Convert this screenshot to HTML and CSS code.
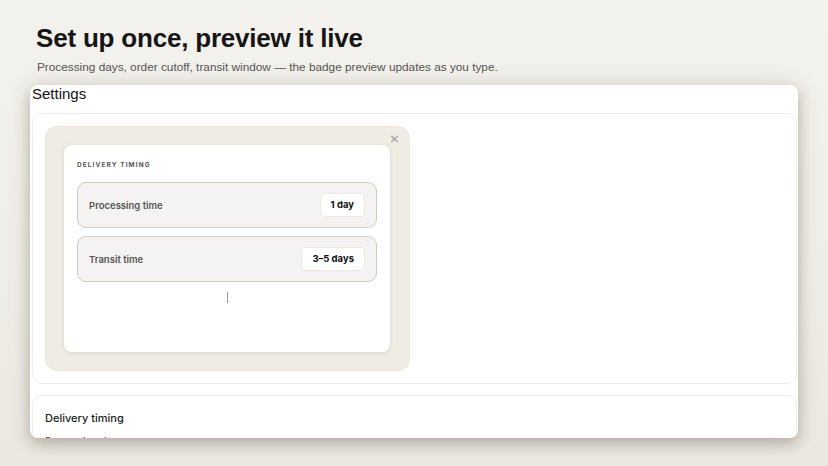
FILE: index.html
```html
<!DOCTYPE html>
<html lang="en">
<head>
  <meta charset="UTF-8" />
  <meta name="viewport" content="width=device-width, initial-scale=1" />
  <title>Delivery badge settings</title>
  <link rel="stylesheet" href="styles.css">
</head>
<body>

  <!-- Page heading -->
  <header class="intro">
    <h1>Set up once, preview it live</h1>
    <p>Processing days, order cutoff, transit window — the badge preview updates as you type.</p>
  </header>

  <!-- Settings window -->
  <main class="window">
    <div class="window-title">Settings</div>

    <!-- Live badge preview -->
    <section class="card preview-card">
      <div class="preview">
        <span class="close">&times;</span>
        <div class="panel">
          <div class="panel-label">DELIVERY TIMING</div>
          <div class="timing-row">
            <span class="timing-name">Processing time</span>
            <span class="badge">1 day</span>
          </div>
          <div class="timing-row">
            <span class="timing-name">Transit time</span>
            <span class="badge">3–5 days</span>
          </div>
          <div class="caret"></div>
        </div>
      </div>
    </section>

    <!-- Form -->
    <section class="card form-card">
      <h3>Delivery timing</h3>
      <label>Processing days</label>
    </section>
  </main>

</body>
</html>
```

FILE: styles.css
```css
body {
  margin: 0;
  height: 466px;
  overflow: hidden;
  font-family: "Liberation Sans", Arial, sans-serif;
  background: linear-gradient(180deg, #f4f2ed 0%, #efede7 60%, #ebe8e1 100%);
  color: #1a1a1a;
}
.intro {
  padding: 22px 36px 0;
}
.intro h1 {
  margin: 0;
  font-size: 26px;
  line-height: 32px;
  font-weight: bold;
  letter-spacing: -0.2px;
  color: #161616;
}
.intro p {
  margin: 5px 0 0 1px;
  font-size: 11.8px;
  line-height: 16px;
  color: #555;
}
/* Window */
.window {
  margin: 10px 30px 0;
  height: 353px;
  overflow: hidden;
  background: #fff;
  border-radius: 8px;
  box-shadow: 0 6px 14px rgba(70, 60, 40, 0.28), 0 0 24px rgba(70, 60, 40, 0.12);
}
.window-title {
  padding: 0 2px;
  font-size: 15px;
  line-height: 18px;
  color: #111;
}
.card {
  margin: 10px 1px 0 2px;
  border: 1px solid #efede9;
  border-radius: 10px;
  padding: 12px;
}
.form-card {
  margin-top: 11px;
  padding: 15px 12px;
}
.form-card h3 {
  margin: 0;
  font-family: Inter, "Liberation Sans", sans-serif;
  font-size: 11px;
  line-height: 14px;
  font-weight: 500;
  color: #1b1b1b;
}
.form-card label {
  display: block;
  margin-top: 10px;
  font-family: Inter, "Liberation Sans", sans-serif;
  font-size: 10px;
  line-height: 12px;
  color: #444;
}
/* Preview */
.preview {
  position: relative;
  width: 326px;
  padding: 18px 19px 18px 18px;
  background: #efece4;
  border: 1px solid #ebe7de;
  border-radius: 12px;
}
.close {
  position: absolute;
  top: 4px;
  right: 9px;
  font-family: "DejaVu Sans", sans-serif;
  font-size: 13px;
  color: #999;
}
.panel {
  height: 185px;
  padding: 12px 13px 10px;
  background: #fff;
  border-radius: 8px;
  box-shadow: 0 1px 4px rgba(80, 70, 50, 0.14);
  font-family: Inter, "Liberation Sans", sans-serif;
}
.panel-label {
  font-size: 6.5px;
  line-height: 16px;
  font-weight: 700;
  letter-spacing: 1.1px;
  color: #555;
  margin-bottom: 9px;
}
.timing-row {
  display: flex;
  align-items: center;
  justify-content: space-between;
  height: 44px;
  padding: 0 11px;
  margin-bottom: 8px;
  background: #f4f3f1;
  border: 1px solid #cfcac1;
  border-radius: 9px;
}
.timing-name {
  font-size: 9.5px;
  font-weight: 600;
  color: #555;
}
.badge {
  padding: 6px 10px;
  font-size: 9.5px;
  line-height: 10px;
  font-weight: 700;
  color: #111;
  background: #fff;
  border: 1px solid #eee9df;
  border-radius: 5px;
}
.caret {
  width: 1px;
  height: 11px;
  margin: 10px auto 0;
  background: #999;
}
```
